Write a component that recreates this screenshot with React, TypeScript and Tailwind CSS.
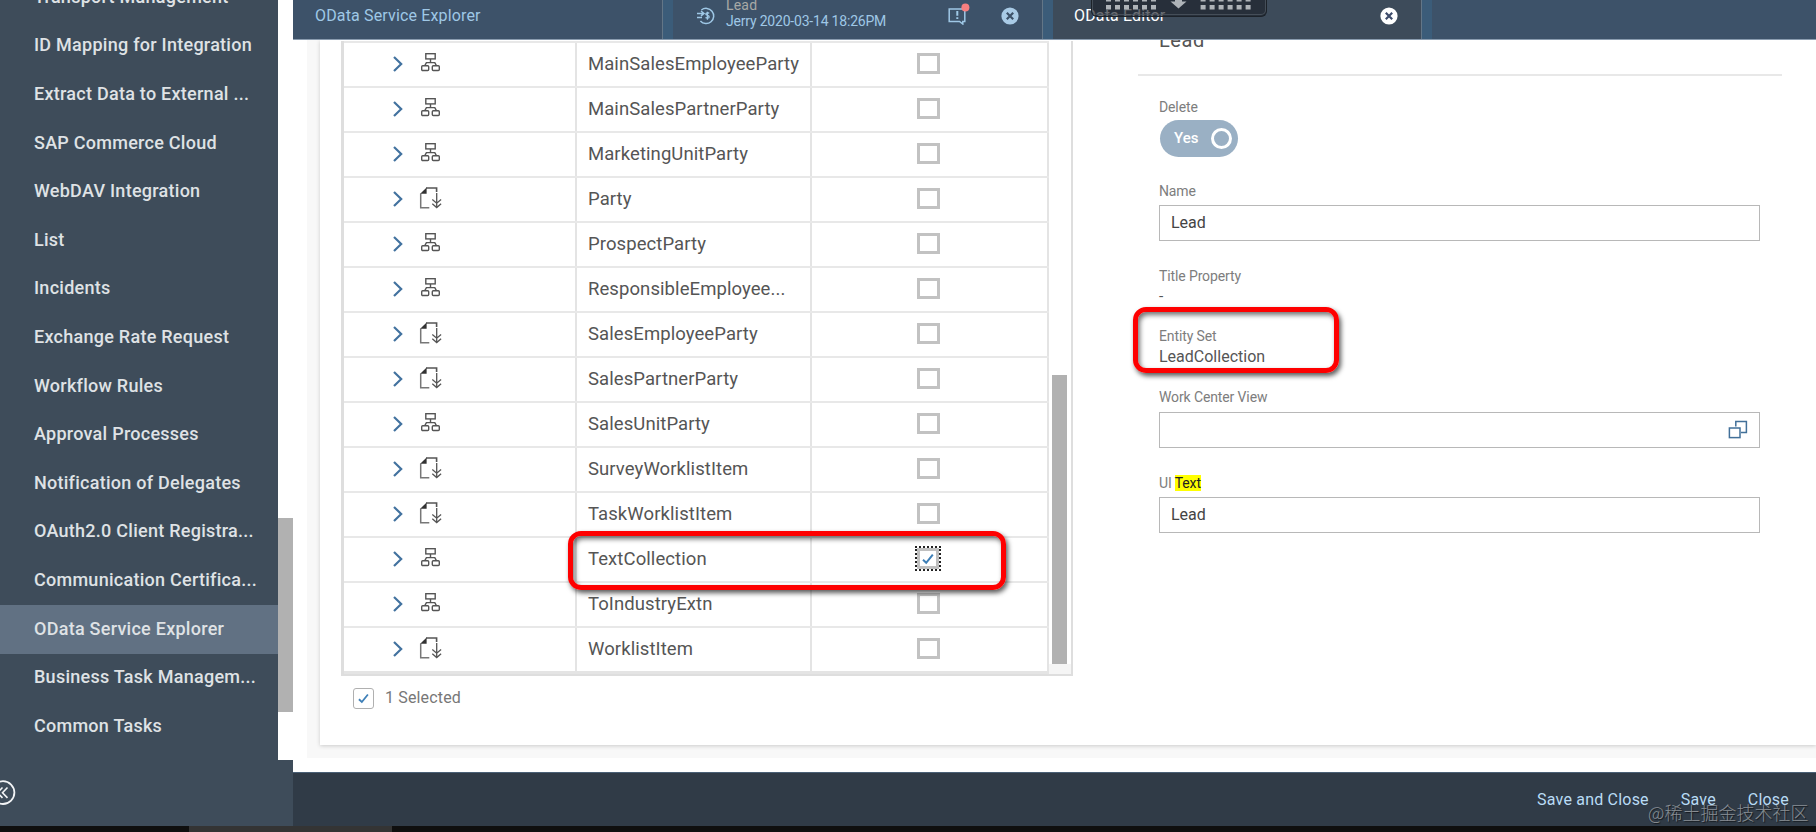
import React from 'react';

interface EntityRow {
  name: string;
  kind: 'tree' | 'doc';
  checked?: boolean;
}

const navItems = [
  'Transport Management',
  'ID Mapping for Integration',
  'Extract Data to External ...',
  'SAP Commerce Cloud',
  'WebDAV Integration',
  'List',
  'Incidents',
  'Exchange Rate Request',
  'Workflow Rules',
  'Approval Processes',
  'Notification of Delegates',
  'OAuth2.0 Client Registra...',
  'Communication Certifica...',
  'OData Service Explorer',
  'Business Task Managem...',
  'Common Tasks',
];

const rows: EntityRow[] = [
  { name: 'MainSalesEmployeeParty', kind: 'tree' },
  { name: 'MainSalesPartnerParty', kind: 'tree' },
  { name: 'MarketingUnitParty', kind: 'tree' },
  { name: 'Party', kind: 'doc' },
  { name: 'ProspectParty', kind: 'tree' },
  { name: 'ResponsibleEmployee...', kind: 'tree' },
  { name: 'SalesEmployeeParty', kind: 'doc' },
  { name: 'SalesPartnerParty', kind: 'doc' },
  { name: 'SalesUnitParty', kind: 'tree' },
  { name: 'SurveyWorklistItem', kind: 'doc' },
  { name: 'TaskWorklistItem', kind: 'doc' },
  { name: 'TextCollection', kind: 'tree', checked: true },
  { name: 'ToIndustryExtn', kind: 'tree' },
  { name: 'WorklistItem', kind: 'doc' },
];

const TreeIcon = () => (
  <svg width="22" height="22" viewBox="0 0 22 22" fill="none" stroke="#555" strokeWidth="1.4">
    <rect x="5.8" y="1.7" width="9.4" height="5.2" />
    <path d="M10.5 7v3.6M4.8 13.6l1.6-3h8.4l1.6 3" />
    <rect x="1.7" y="13.7" width="7" height="4.8" rx="1" />
    <rect x="12.3" y="13.7" width="7" height="4.8" rx="1" />
  </svg>
);

const DocIcon = () => (
  <svg width="24" height="24" viewBox="0 0 24 24" fill="none" stroke="#555" strokeWidth="1.3">
    <path d="M7 2h10.6v4" strokeWidth="1.6" />
    <path d="M1.7 7.5v14.3h8.6" stroke="#777" strokeWidth="1.5" />
    <path d="M1.2 7.8L7.6 1.4v6.4z" fill="#333" stroke="none" />
    <path d="M17.7 7v14.6M13.3 13.6l4.4 3.6 4.4-3.6M13.3 17.8l4.4 3.8 4.4-3.8" />
  </svg>
);

const Check = ({ size }: { size: number }) => (
  <svg width={size} height={size} viewBox="0 0 12 12" fill="none" stroke="#3f80b8" strokeWidth="2">
    <path d="M1 6.8l3.2 3L10.8 1.6" />
  </svg>
);

const CloseIcon = ({ bg, fg }: { bg: string; fg: string }) => (
  <svg width="18" height="18" viewBox="0 0 18 18">
    <circle cx="9" cy="9" r="8.6" fill={bg} />
    <path d="M5.8 5.8l6.4 6.4M12.2 5.8l-6.4 6.4" stroke={fg} strokeWidth="2.2" />
  </svg>
);

const Sidebar = () => (
  <aside className="w-[293px] shrink-0 bg-[#3e4c5a] flex flex-col">
    <div className="h-[760px] flex">
      <nav className="w-[278px] h-full overflow-hidden">
        <ul className="-mt-[26.5px]">
          {navItems.map(item => (
            <li
              key={item}
              className={`h-[48.6px] pl-[34px] pb-[3px] flex items-center whitespace-nowrap text-[18px] tracking-[0.26px] font-medium text-[#dfe2e5] ${item === 'OData Service Explorer' ? 'bg-[#617183]' : ''}`}
            >
              {item}
            </li>
          ))}
        </ul>
      </nav>
      <div className="w-[15px] bg-white pt-[518px]">
        <div className="h-[194px] bg-[#b1b1b1]" />
      </div>
    </div>
    <div className="flex-1 pt-[20px] overflow-hidden">
      <svg className="-ml-[10px]" width="26" height="26" viewBox="0 0 26 26" fill="none" stroke="#f2f4f6" strokeWidth="1.8">
        <circle cx="13" cy="12.6" r="11.4" />
        <path d="M12.5 7.5l-5 5.2 5 5.2M17.5 7.5l-5 5.2 5 5.2" strokeWidth="1.6" />
      </svg>
    </div>
  </aside>
);

const TabBar = () => (
  <header className="h-10 shrink-0 flex bg-[#3d5269] border-b border-[#8a9caf] text-[16px] text-[#9fc8e6]">
    <div className="w-[370px] pl-[22px] pb-[7px] flex items-center border-r border-[#637687] tracking-[0.15px]">OData Service Explorer</div>
    <div className="w-[10px] bg-[#3b5c79]" />
    <div className="w-[370px] pl-[24px] flex items-start border-r border-[#637687] overflow-hidden">
      <svg className="mt-[7px]" width="18" height="18" viewBox="0 0 18 18" fill="none" stroke="#9fc8e6" strokeWidth="1.5">
        <path d="M4.4 3A7.6 7.6 0 1 1 3.4 14M0 6.4h6M0 10.6h5M4 4l3 2.4-3 2.4" />
        <path d="M12.2 6.4c-1-1-3.6-.8-3.4.8.2 1.6 3.4 1 3.4 2.7 0 1.5-2.6 1.6-3.7.6M10.4 4.8v8" strokeWidth="1.3" />
      </svg>
      <div className="ml-[11px] w-[222px] text-[14px] leading-[16px] -mt-[3px]">
        <div className="text-[#a8a9a6] tracking-[0.2px]">Lead</div>
        <div className="tracking-[-0.2px]">Jerry 2020-03-14 18:26PM</div>
      </div>
      <svg className="mt-[3px]" width="22" height="22" viewBox="0 0 22 22" fill="none" stroke="#9fc8e6" strokeWidth="1.5">
        <path d="M1.2 6h15.6v12.4h-2v2.6l-3.3-2.6H1.2z" />
        <path d="M9.3 8v4.8M9.3 14.3v1.8" strokeWidth="2" />
        <circle cx="17.4" cy="4.4" r="4" fill="#f77f80" stroke="none" />
      </svg>
      <div className="ml-[31px] mt-[7px]">
        <CloseIcon bg="#a9cbe6" fg="#3d5269" />
      </div>
    </div>
    <div className="w-[10px] bg-[#3b5c79]" />
    <div className="w-[369px] pl-[21px] pb-[7px] flex items-center bg-[#3d4b5a] border-r border-[#637687] text-white">
      <span className="w-[306px] tracking-[0.15px]">OData Editor</span>
      <CloseIcon bg="#ffffff" fg="#3d4b6a" />
    </div>
    <div className="w-[10px] bg-[#3b5c79]" />
  </header>
);

const EntityTable = () => (
  <div className="mt-px w-[732px] h-[635px] flex border-l-3 border-r-2 border-b-2 border-[#dedede]">
    <div className="flex-1 border-b-3 border-[#e4e4e4]">
      {rows.map(row => (
        <div key={row.name} className="h-[45px] flex border-t-2 border-[#e8e8e8]">
          <div className="w-[233px] pl-[49px] flex items-center border-r-2 border-[#e4e4e4]">
            <svg className="mb-[2px]" width="10" height="16" viewBox="0 0 10 16" fill="none" stroke="#42729f" strokeWidth="2.2">
              <path d="M1 1l7.2 7L1 15" />
            </svg>
            <span className="w-[24px] ml-[16px] mb-[4px] flex justify-center">
              {row.kind === 'tree' ? <TreeIcon /> : <DocIcon />}
            </span>
          </div>
          <div className="w-[235px] pl-[11px] pt-px flex items-center border-r-2 border-[#e4e4e4] text-[18.5px] tracking-[0.08px] text-[#555] whitespace-nowrap">
            {row.name}
          </div>
          <div className="flex-1 pl-[105px] pb-[2px] flex items-center border-r-2 border-[#e4e4e4]">
            {row.checked ? (
              <div className="-ml-[2px] border-2 border-dotted border-[#222]">
                <div className="w-[22px] h-[21px] border-3 border-[#c0c0c0] flex items-center justify-center">
                  <Check size={12} />
                </div>
              </div>
            ) : (
              <div className="w-[23px] h-[21px] border-3 border-[#c2c2c2]" />
            )}
          </div>
        </div>
      ))}
    </div>
    <div className="w-[22px] flex flex-col">
      <div className="ml-[3px] mt-[334px] w-[15px] h-[289px] bg-[#b1b1b1]" />
      <div className="flex-1 bg-[#f5f5f5]" />
    </div>
  </div>
);

const Label = ({ children }: { children: React.ReactNode }) => (
  <div className="h-[20px] text-[14px] leading-[20px] tracking-[-0.12px] text-[#7d7d7d]">{children}</div>
);

const DetailForm = () => (
  <section className="ml-[65px] w-[644px]">
    <div className="h-[36px] pl-[21px] border-b-2 border-[#e8e8e8]">
      <div className="-translate-y-[12px] text-[20px] leading-[24px] tracking-[0.6px] text-[#555]">Lead</div>
    </div>
    <div className="pl-[21px] pr-[22px] pt-[21px]">
      <Label>Delete</Label>
      <div className="ml-px mt-[3px] w-[78px] h-[37px] rounded-full bg-[#9ab0c4] pl-[14px] pr-[6px] flex items-center justify-between text-[15px] font-medium text-white">
        Yes
        <div className="w-[21px] h-[21px] rounded-full border-[3px] border-white" />
      </div>
      <div className="mt-[24px]">
        <Label>Name</Label>
      </div>
      <div className="mt-[4px] h-[36px] pl-[11px] border border-[#b8b8b8] flex items-center text-[16px] text-[#444]">Lead</div>
      <div className="mt-[25px]">
        <Label>Title Property</Label>
      </div>
      <div className="h-[21px] text-[15.5px] leading-[21px] text-[#555]">-</div>
      <div className="mt-[19px]">
        <Label>Entity Set</Label>
      </div>
      <div className="h-[21px] text-[16px] leading-[21px] text-[#555]">LeadCollection</div>
      <div className="mt-[20px]">
        <Label>Work Center View</Label>
      </div>
      <div className="mt-[5px] h-[36px] pr-[11px] border border-[#b8b8b8] flex items-center justify-end">
        <svg width="20" height="20" viewBox="0 0 20 20" fill="none" stroke="#427099" strokeWidth="1.5">
          <path d="M7.8 6.4V1.6h10.6v10.8h-5.4" />
          <rect x="1.4" y="8" width="10.6" height="9.6" />
        </svg>
      </div>
      <div className="mt-[25px]">
        <Label>
          UI <span className="bg-[#ffff00] text-[#222]">Text</span>
        </Label>
      </div>
      <div className="mt-[4px] h-[36px] pl-[11px] border border-[#b8b8b8] flex items-center text-[16px] text-[#444]">Lead</div>
    </div>
  </section>
);

const ScreenHandle = () => (
  <div className="absolute left-[1091px] top-0 w-[176px] h-[17px] rounded-b-md border border-t-0 border-[#1c2229] bg-[#1b2129]/65">
    <div className="h-[15px] rounded-b-[5px] border border-t-0 border-[#535c65]/70">
      <svg width="172" height="13" viewBox="0 0 172 13" fill="#aeb3b8">
        {[0, 1, 2, 3, 4, 5].map(i => (
          <g key={i}>
            <rect x={13 + i * 9} y="0" width="5" height="1.5" />
            <rect x={13 + i * 9} y="5" width="5" height="4.5" />
            <rect x={107.6 + i * 9} y="0" width="5" height="1.5" />
            <rect x={107.6 + i * 9} y="5" width="5" height="4.5" />
          </g>
        ))}
        <path d="M82 0h7v1.5h4.5L85.5 8.5 77.5 1.5H82z" />
      </svg>
    </div>
  </div>
);

export default function App() {
  return (
    <div className="relative w-[1816px] h-[832px] overflow-hidden flex flex-col bg-white font-[Roboto,'Liberation_Sans',sans-serif]">
      <div className="h-[826px] flex">
        <Sidebar />
        <main className="flex-1 flex flex-col">
          <div className="relative z-10">
            <TabBar />
          </div>
          <div className="h-[732px] pl-[14px] pb-[14px] flex">
            <div className="flex-1 bg-[#f8f8f8] pl-[13px] pb-[13px] flex overflow-hidden">
              <div className="flex-1 bg-white shadow-[0_1px_4px_rgba(0,0,0,0.18)] pl-[21px] flex">
                <div>
                  <EntityTable />
                  <div className="pt-[10px] pl-[12px] flex items-center text-[16px] tracking-[0.15px] text-[#777]">
                    <div className="w-[21px] h-[21px] mr-[11px] rounded-[3px] border border-[#b0b0b0] flex items-center justify-center">
                      <Check size={11} />
                    </div>
                    1 Selected
                  </div>
                </div>
                <DetailForm />
              </div>
            </div>
          </div>
          <footer className="h-[54px] pr-[27px] bg-[#303b47] border-t border-[#4a6076] flex items-center justify-end gap-[32px] text-[16px] tracking-[0.2px] text-[#b9dcf5]">
            <span>Save and Close</span>
            <span>Save</span>
            <span>Close</span>
          </footer>
        </main>
      </div>
      <div className="h-[6px] bg-[#0f0f0f] pl-[189px]">
        <div className="w-[203px] h-full bg-[#343434]" />
      </div>

      <div className="relative z-20 -order-1">
        <ScreenHandle />
      </div>
      <div className="absolute left-[568px] top-[531px] w-[438px] h-[59px] rounded-[13px] border-[5px] border-[#fe0000] shadow-[2px_3px_5px_rgba(0,0,0,0.65),inset_2px_3px_5px_rgba(0,0,0,0.55)]" />
      <div className="absolute left-[1133px] top-[307px] w-[206px] h-[66px] rounded-[13px] border-[5px] border-[#fe0000] shadow-[2px_3px_5px_rgba(0,0,0,0.65),inset_2px_3px_5px_rgba(0,0,0,0.55)]" />
      <div className="absolute left-[1648px] top-[799px] text-[18px] leading-[26px] font-light whitespace-nowrap text-white/45 font-['Noto_Sans_CJK_SC',sans-serif] [text-shadow:1px_1px_1px_rgba(0,0,0,0.6)]">
        @稀土掘金技术社区
      </div>
    </div>
  );
}
